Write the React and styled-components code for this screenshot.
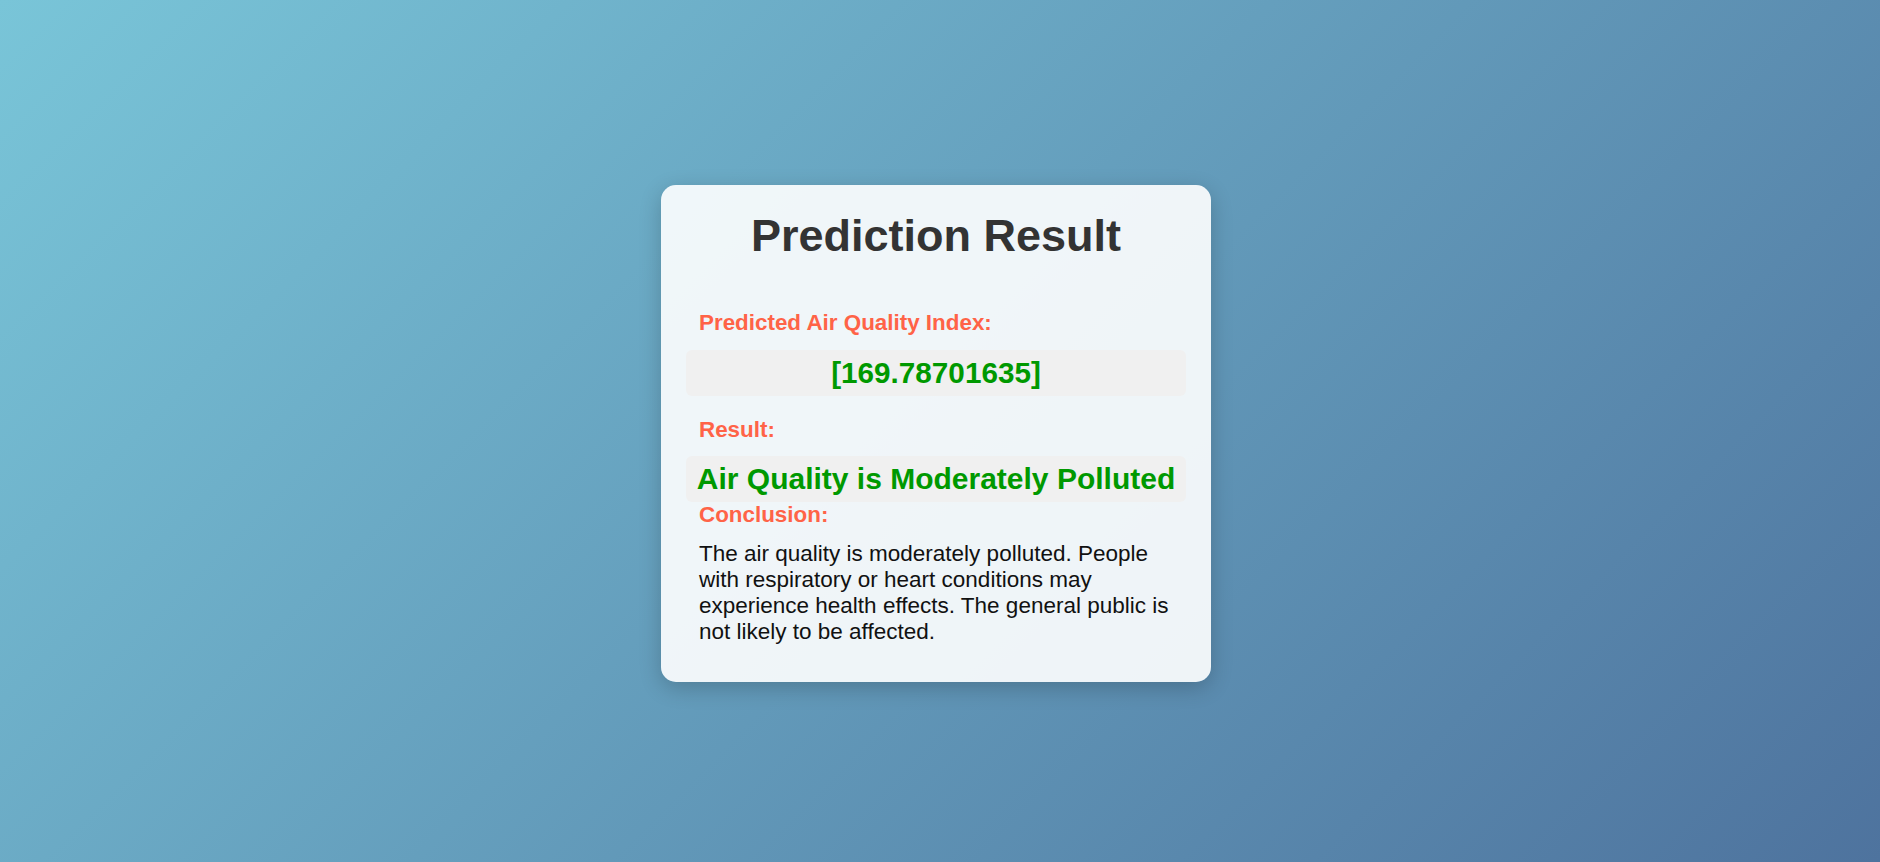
import React from "react";
import styled, { createGlobalStyle } from "styled-components";

const GlobalStyle = createGlobalStyle`
  html, body {
    margin: 0;
    padding: 0;
  }
  body {
    font-family: "Liberation Sans", Arial, sans-serif;
    background: linear-gradient(135deg, #79c5d8 0%, #4e739e 100%);
    min-height: 100vh;
  }
`;

const Page = styled.main`
  min-height: 100vh;
  box-sizing: border-box;
  display: flex;
  align-items: center;
  justify-content: center;
  padding: 5px 8px 0 0;
`;

const Card = styled.section`
  width: 550px;
  box-sizing: border-box;
  padding: 24px 25px;
  background: rgba(255, 255, 255, 0.9);
  border-radius: 15px;
  box-shadow: 0 6px 22px rgba(0, 0, 0, 0.2);
  display: flex;
  flex-direction: column;
`;

const Title = styled.h1`
  margin: 0 0 47px;
  font-size: 45px;
  line-height: 54px;
  font-weight: 700;
  color: #333;
  text-align: center;
`;

const Label = styled.h3`
  margin: ${(p) => p.$top || 0}px 0 ${(p) => p.$bottom ?? 14}px;
  padding: 0 13px;
  font-size: 22.4px;
  line-height: 25.8px;
  font-weight: 700;
  color: #ff6347;
`;

const ValueBox = styled.div`
  background: #f0f0f0;
  border-radius: 6px;
  padding: ${(p) => p.$pad};
  font-size: ${(p) => p.$size}px;
  line-height: ${(p) => p.$lh}px;
  font-weight: 700;
  color: #009900;
  text-align: center;
  white-space: nowrap;
`;

const Text = styled.p`
  margin: 0 0 13px;
  padding: 0 13px;
  font-size: 22.5px;
  line-height: 26px;
  color: #111;
`;

export default function App() {
  return (
    <>
      <GlobalStyle />
      <Page>
        <Card>
          <Title>Prediction Result</Title>
          <Label>Predicted Air Quality Index:</Label>
          <ValueBox $size={29.7} $lh={34} $pad="6px 10px">[169.78701635]</ValueBox>
          <Label $top={21}>Result:</Label>
          <ValueBox $size={30} $lh={36} $pad="5px 10px">
            Air Quality is Moderately Polluted
          </ValueBox>
          <Label $bottom={13}>Conclusion:</Label>
          <Text>
            The air quality is moderately polluted. People with respiratory or
            heart conditions may experience health effects. The general public
            is not likely to be affected.
          </Text>
        </Card>
      </Page>
    </>
  );
}
